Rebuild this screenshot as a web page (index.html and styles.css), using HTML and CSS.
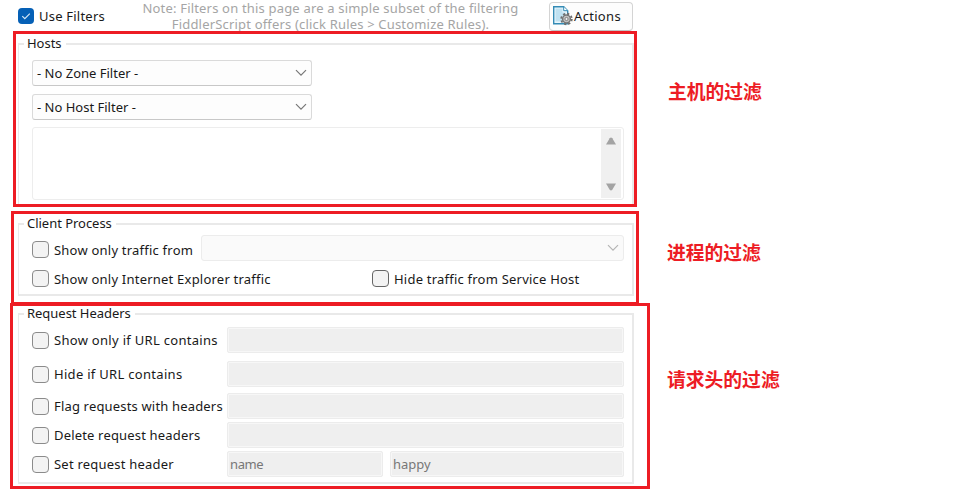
FILE: index.html
```
<!DOCTYPE html>
<html lang="zh">
<head>
<meta charset="utf-8">
<title>Filters</title>
<link rel="stylesheet" href="styles.css">
</head>
<body>
<header class="topbar">
  <label class="use"><span class="check on"><svg viewBox="0 0 16 16"><path d="M4.3 8.2l2.5 2.5 5-5"/></svg></span><span class="label">Use Filters</span></label>
  <p class="hint">Note: Filters on this page are a simple subset of the filtering FiddlerScript offers (click Rules &gt; Customize Rules).</p>
  <button class="actions"><svg viewBox="0 0 21 21" class="gear">
    <path d="M1.7 1.7h10l4 4v13h-14z" fill="#e9f6fc" stroke="#348bb5" stroke-width="1.4"/>
    <path d="M3.5 3.5h7v4h3v9h-10z" fill="#bfe1f1"/>
    <path d="M11.7 1.7v4h4" fill="#fff" stroke="#348bb5"/>
    <circle cx="14.5" cy="14" r="5.3" fill="none" stroke="#6e6e6e" stroke-width="1.8" stroke-dasharray="2.2 1.96"/>
    <circle cx="14.5" cy="14" r="3.9" fill="#c4c4c4" stroke="#777" stroke-width="1.5"/>
    <circle cx="14.5" cy="14" r="1.6" fill="#eee" stroke="#777" stroke-width=".9"/>
  </svg><span>Actions</span></button>
</header>

<section class="row row-hosts">
  <div class="frame">
    <div class="group">
      <h2>Hosts</h2>
      <div class="select"><span>- No Zone Filter -</span><svg viewBox="0 0 12 8"><path d="M1 1.2l5 5 5-5"/></svg></div>
      <div class="select second"><span>- No Host Filter -</span><svg viewBox="0 0 12 8"><path d="M1 1.2l5 5 5-5"/></svg></div>
      <div class="textarea"><div class="scroll">
        <svg viewBox="0 0 12 8"><path d="M1 7.5L4.7 1.2Q6-.2 7.3 1.2L11 7.5Z"/></svg>
        <svg viewBox="0 0 12 8"><path d="M1 .5L4.7 6.8Q6 8.2 7.3 6.8L11 .5Z"/></svg>
      </div></div>
    </div>
  </div>
  <strong class="remark">主机的过滤</strong>
</section>

<section class="row row-process">
  <div class="frame">
    <div class="group">
      <h2>Client Process</h2>
      <div class="line from"><span class="check"></span><span class="label">Show only traffic from</span><div class="select disabled"><svg viewBox="0 0 12 8"><path d="M1 1.2l5 5 5-5"/></svg></div></div>
      <div class="line pair"><div class="line"><span class="check"></span><span class="label">Show only Internet Explorer traffic</span></div><div class="line"><span class="check dark"></span><span class="label">Hide traffic from Service Host</span></div></div>
    </div>
  </div>
  <strong class="remark">进程的过滤</strong>
</section>

<section class="row row-headers">
  <div class="frame">
    <div class="group">
      <h2>Request Headers</h2>
      <div class="fields">
        <span class="check"></span><span class="label wide">Show only if URL contains</span><div class="input"></div>
        <span class="check"></span><span class="label wide">Hide if URL contains</span><div class="input"></div>
        <span class="check"></span><span class="label tight">Flag requests with headers</span><div class="input"></div>
        <span class="check"></span><span class="label tight">Delete request headers</span><div class="input"></div>
        <span class="check"></span><span class="label">Set request header</span><div class="split"><div class="input name">name</div><div class="input">happy</div></div>
      </div>
    </div>
  </div>
  <strong class="remark">请求头的过滤</strong>
</section>
</body>
</html>
```
FILE: styles.css
```
* { box-sizing: border-box; }
body {
  margin: 0;
  height: 489px;
  overflow: hidden;
  background: #fff;
  color: #191919;
  font: 13px/16px "Noto Sans", "Noto Sans CJK SC", sans-serif;
}
svg { display: block; flex: none; }

.topbar { display: flex; height: 31px; padding-left: 18px; }
.use { display: flex; align-items: flex-start; gap: 5px; width: 121px; padding-top: 8px; }
.check {
  flex: none;
  width: 17px;
  height: 17px;
  border: 1px solid #8b8b8b;
  border-radius: 4px;
  background: #f3f3f3;
}
.check.dark { border-color: #666; }
.check.on { width: 16px; height: 16px; border: 0; background: #0560b6; }
.check.on path { fill: none; stroke: #d8e8f6; stroke-width: 1.2; }
.label { letter-spacing: .22px; white-space: nowrap; }
.label.wide { letter-spacing: .3px; }
.label.tight { letter-spacing: .17px; }
.hint { width: 383px; margin: 0; text-align: center; color: #a5a5a5; letter-spacing: .18px; }
.actions {
  display: flex;
  align-items: center;
  gap: 1px;
  width: 84px;
  height: 29px;
  margin: 2px 0 0 27px;
  padding: 0 0 2px 2px;
  border: 1px solid #d4d4d4;
  border-bottom-color: #c4c4c4;
  border-radius: 4px;
  background: #fdfdfd;
  color: #191919;
  font: inherit;
  letter-spacing: .32px;
}
.gear { width: 21px; height: 21px; }

.row { display: flex; }
.frame { flex: none; border: 3px solid #ed1c24; }
.group { border: 2px solid #e9e9e9; border-left-width: 1px; padding: 0 8px 0 13px; }
.group h2 {
  width: fit-content;
  margin: -8px 0 0 -8px;
  padding: 0 4px 2px 3px;
  background: #fff;
  font-size: 13px;
  font-weight: 400;
  line-height: 13px;
  letter-spacing: -.03px;
}
.remark { color: #ed1c24; font: 700 18.8px/24px "Noto Sans CJK SC", sans-serif; }

.row-hosts { padding-left: 13px; }
.row-hosts .frame { width: 624px; height: 176px; padding: 9px 0 0 2px; }
.row-hosts .group { width: 616px; height: 161px; border-bottom: 0; }
.row-hosts .remark { margin: 48px 0 0 31px; }

.select {
  display: flex;
  align-items: center;
  justify-content: space-between;
  width: 280px;
  height: 26px;
  margin-top: 8px;
  padding: 0 4px;
  border: 1px solid #dadada;
  border-bottom-color: #c8c8c8;
  border-radius: 3px;
  background: #fdfdfd;
}
.select svg { width: 12px; height: 8px; }
.select path { fill: none; stroke: #777; stroke-width: 1.2; }
.textarea {
  display: flex;
  justify-content: flex-end;
  width: 592px;
  height: 73px;
  margin-top: 7px;
  padding: 1px 2px 1px 1px;
  border: 1px solid #ededed;
  border-radius: 3px;
}
.scroll {
  display: flex;
  flex-direction: column;
  justify-content: space-between;
  align-items: center;
  width: 20px;
  padding: 8px 0 7px;
  background: #f0f0f0;
}
.scroll svg { width: 12px; height: 8px; }
.scroll path { fill: #a3a3a3; }

.row-process { margin-top: 4px; padding-left: 11px; }
.row-process .frame { width: 628px; height: 94px; padding: 9px 0 0 4px; }
.row-process .group { width: 616px; height: 73px; }
.row-process .remark { margin: 29px 0 0 28px; }
.line { display: flex; align-items: center; gap: 5px; }
.from { margin-top: 3px; }
.from .check, .from .label { margin-top: 3px; }
.from .select {
  flex: 1;
  margin: 0 0 0 3px;
  justify-content: flex-end;
  border-color: #ececec;
  background: #fafafa;
}
.from .select path { stroke: #b5b5b5; }
.pair { margin-top: 9px; gap: 0; }
.pair > :first-child { width: 340px; }

.row-headers { margin-top: -2px; padding-left: 10px; }
.row-headers .frame { width: 640px; height: 186px; padding: 7px 0 0 5px; }
.row-headers .group { width: 616px; height: 171px; }
.row-headers .remark { margin: 64px 0 0 17px; }
.fields {
  display: grid;
  grid-template-columns: 17px 168px 1fr;
  grid-template-rows: 34px 32px 29px 29px 26px;
  column-gap: 5px;
  margin-top: 5px;
}
.fields > .check { margin-top: 5px; }
.fields > .label { margin-top: 5px; }
.input {
  width: 397px;
  height: 26px;
  padding: 4px 2px;
  border: 1px solid #ececec;
  border-radius: 2px;
  background: #efefef;
  box-shadow: inset 0 0 0 1px #f7f7f7;
  color: #777;
}
.split { display: flex; gap: 7px; width: 397px; }
.split .input { flex: 1; }
.split .name { flex: 0 0 156px; letter-spacing: -.4px; }
```
